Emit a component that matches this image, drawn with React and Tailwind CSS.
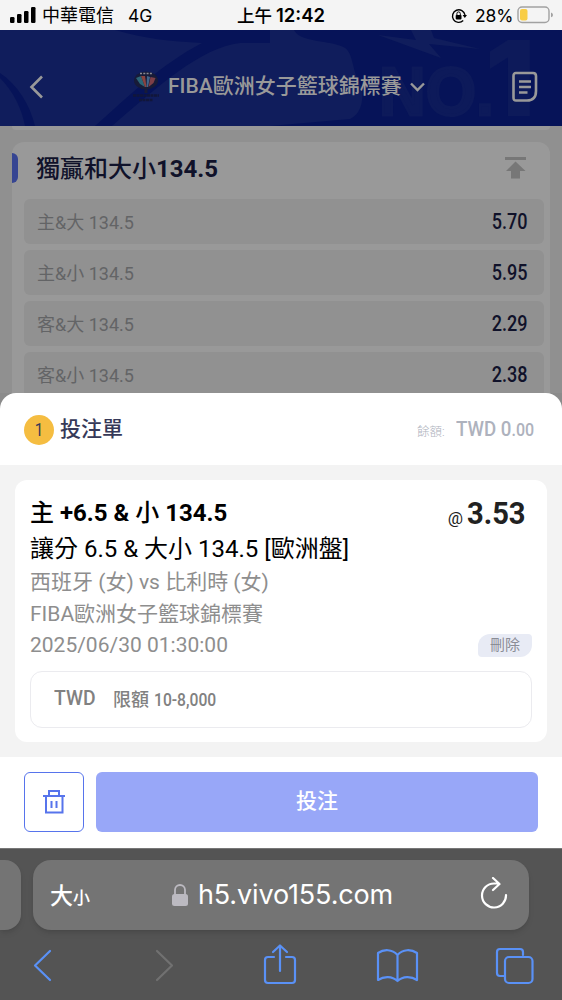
import clsx from "clsx";

const odds = [
  { label: "主&大 134.5", value: "5.70" },
  { label: "主&小 134.5", value: "5.95" },
  { label: "客&大 134.5", value: "2.29" },
  { label: "客&小 134.5", value: "2.38" },
];

const roboto = "font-[Roboto,'Noto_Sans_CJK_TC',sans-serif]";
const inter = "font-[Inter,'Noto_Sans_CJK_TC',sans-serif]";

function StatusBar() {
  return (
    <div className={clsx("flex h-[30px] shrink-0 items-center bg-[#f4f4f4] text-black", inter)}>
      <svg width="26" height="16" viewBox="0 0 26 16" className="ml-[10px] shrink-0">
        <rect x="0" y="10" width="4.5" height="6" rx="1.2" />
        <rect x="7" y="7" width="4.5" height="9" rx="1.2" />
        <rect x="14" y="4" width="4.5" height="12" rx="1.2" />
        <rect x="21" y="0" width="4.5" height="16" rx="1.2" />
      </svg>
      <span className="ml-[6px] w-[86px] pt-px text-[18px] whitespace-nowrap">中華電信</span>
      <span className="w-[109px] pt-[3px] text-[17.5px] whitespace-nowrap">4G</span>
      <span className="w-[214px] pt-[2px] text-[17.5px] whitespace-nowrap">
        <span className="font-medium">上午</span>
        <span className="ml-[4px] text-[18.5px] font-semibold">12:42</span>
      </span>
      <svg width="16" height="16" viewBox="0 0 16 16" className="mt-px shrink-0">
        <path d="M12.2 12.6A6.3 6.3 0 1 1 14 7" fill="none" stroke="#000" strokeWidth="1.4" />
        <path d="M11.6 7H16L13.8 10z" />
        <rect x="4.7" y="7" width="5.8" height="4.4" rx=".8" />
        <path d="M5.9 7V5.6a1.7 1.7 0 0 1 3.4 0V7" fill="none" stroke="#000" strokeWidth="1" />
      </svg>
      <span className="ml-2 w-[42px] pt-[3px] text-[17.5px] tracking-[-.1px] whitespace-nowrap">28%</span>
      <svg width="38" height="18" viewBox="0 0 38 18" className="shrink-0">
        <rect x="1" y="1" width="31" height="15.5" rx="4" fill="none" stroke="#a1a1a1" strokeWidth="1.4" />
        <rect x="3" y="3" width="7.5" height="11.5" rx="2" fill="#f8cd46" />
        <path d="M34 6.5q2 .7 2 2.4T34 11.3z" fill="#a1a1a1" />
      </svg>
    </div>
  );
}

function HeaderArt() {
  return (
    <svg viewBox="0 0 562 96" className="absolute inset-0 h-full w-full" fill="#101d5c">
      <path d="M0 0H115C145 9 170 11 202 13C160 35 130 65 95 96H35C30 75 18 55 0 43z" />
      <path d="M0 48C14 62 22 80 25 96H0z" />
      <path d="M270 13H240C200 18 160 55 112 96H270L350 89C363 83 363 67 362 57C350 40 355 20 341 16C325 10 300 12 294 0H270z" />
      <path d="M378 5L416 10L411 0H431L434 8L480 19L429 14L441 28z" />
      <g fill="#0d1a5a">
        <text x="379" y="85" fontSize="69" textLength="115" lengthAdjust="spacingAndGlyphs" fontWeight="700" stroke="#0d1a5a" strokeWidth="3" className="font-['Liberation_Sans',sans-serif]">
          NO.
        </text>
        <text x="485" y="86" fontSize="104" textLength="50" lengthAdjust="spacingAndGlyphs" fontWeight="900" className="font-[Inter,sans-serif]">
          1
        </text>
      </g>
    </svg>
  );
}

function Emblem() {
  return (
    <svg width="28" height="32" viewBox="0 0 28 32" className="shrink-0">
      <ellipse cx="14" cy="9.5" rx="12" ry="9" fill="#171b38" />
      <path d="M4 7l4 6 5 3-4-11z" fill="#2b6577" />
      <path d="M9 5l4 11h1.500L13 5z" fill="#8a4340" />
      <path d="M14.500 16l.5-11 3 1-2 10z" fill="#436489" />
      <path d="M16.500 16l2-10 5 1-2 5z" fill="#7d3f48" />
      <path d="M8 2.500h12" stroke="#8a8a94" strokeWidth="1.5" strokeDasharray="2 1.3" />
      <path d="M14 18v4" stroke="#171b38" strokeWidth="3" />
      <path d="M1 24.500h26M7 29h14" stroke="#11163a" strokeWidth="2.5" strokeDasharray="3 .5" />
    </svg>
  );
}

function Header() {
  return (
    <header className={clsx("relative h-24 shrink-0 bg-[#061358] text-[#999]", roboto)}>
      <HeaderArt />
      <div className="relative flex h-full items-center pt-[18px]">
        <svg width="15" height="24" viewBox="0 0 15 24" className="ml-[29px] shrink-0" fill="none" stroke="currentColor" strokeWidth="2.6">
          <path d="M13 1.5L2.5 12L13 22.5" />
        </svg>
        <div className="ml-[88px] flex w-[36px]">
          <Emblem />
        </div>
        <span className="w-[242px] text-[21px] font-medium whitespace-nowrap">FIBA歐洲女子籃球錦標賽</span>
        <svg width="15" height="10" viewBox="0 0 15 10" fill="none" stroke="currentColor" strokeWidth="2.4">
          <path d="M1 1.5L7.5 8L14 1.5" />
        </svg>
        <svg width="26" height="32" viewBox="0 0 26 32" className="ml-[87px] shrink-0" fill="none" stroke="currentColor" strokeWidth="2.6">
          <path d="M4 2H21Q24 2 24 5V20Q24 29.5 15 29.5H4Q1.5 29.5 1.5 27V5Q1.5 2 4 2z" />
          <path d="M7 10.5H19M7 16H19M7 21.5H15.5" />
        </svg>
      </div>
    </header>
  );
}

function Market() {
  return (
    <main className={clsx("h-[267px] shrink-0 overflow-hidden bg-[#909090] px-3", roboto)}>
      <div className="h-1 rounded-b-xl bg-[#999]" />
      <section className="mt-3 h-[260px] rounded-t-xl bg-[#999]">
        <div className="flex h-[57px] items-start">
          <div className="mt-[11px] h-[30px] w-[6px] rounded-r-md bg-[#364592]" />
          <h2 className="mt-[9px] ml-[18px] w-[463px] text-[24px] leading-9 font-medium text-[#10122a]">
            獨贏和大小<span className="font-bold">134.5</span>
          </h2>
          <svg width="22" height="22" viewBox="0 0 22 22" className="mt-[15px] ml-[6px]" fill="#777">
            <path d="M0 0H21V3H0zM10.500 4.500L20.500 14H15V21.500H6V14H1z" />
          </svg>
        </div>
        <div className="mr-[6px] ml-3 flex flex-col gap-[6px]">
          {odds.map((o) => (
            <div key={o.label} className="flex h-[45px] shrink-0 items-center justify-between rounded-md bg-[#919191] pt-px pr-[16px] pl-[13px]">
              <span className="text-[18px] text-[#636466]">{o.label}</span>
              <span className="origin-right scale-x-[.84] text-[21.5px] font-medium text-[#10122a]">{o.value}</span>
            </div>
          ))}
        </div>
      </section>
    </main>
  );
}

function BetSlip() {
  return (
    <div className="h-[455px] shrink-0 bg-[#8b8b8b]">
      <div className={clsx("flex h-full flex-col rounded-t-2xl bg-white", roboto)}>
        <div className="flex h-[72px] shrink-0 items-center pt-px">
          <span className="ml-6 flex h-[30px] w-[30px] items-center justify-center rounded-full bg-[#f5bd41] text-[18px] text-[#363958]">
            <span className="scale-x-[.85]">1</span>
          </span>
          <span className="ml-[6px] text-[21px] font-medium text-[#363958]">投注單</span>
          <div className="mr-[28px] ml-auto flex items-baseline text-[#aeb2bd]">
            <span className="w-[39px] text-[12.5px] font-light">餘額:</span>
            <span className="w-[78px] origin-left scale-x-[.89] text-[21px] font-medium whitespace-nowrap">
              TWD 0<span className="text-[18px]">.00</span>
            </span>
          </div>
        </div>
        <div className="h-[292px] shrink-0 bg-[#f3f3f3] p-[15px]">
          <div className="h-[262px] rounded-xl bg-white px-[15px] pt-[15px]">
            <div className="flex h-9 items-center justify-between">
              <span className="text-[24px] font-medium whitespace-nowrap text-black">
                主 <span className="font-bold">+6.5 &</span> 小 <span className="font-bold">134.5</span>
              </span>
              <span className="mt-1 mr-[7px] flex items-baseline text-[#212121]">
                <span className="text-[17px] leading-9">@</span>
                <span className="ml-[4px] w-[58px] origin-left scale-x-[.91] text-[32px] leading-9 font-bold">3.53</span>
              </span>
            </div>
            <div className="h-9 text-[24px] leading-9 text-black">讓分 6.5 & 大小 134.5 [歐洲盤]</div>
            <div className="flex items-end justify-between text-[21px] leading-[31.5px] text-[#8e8e8e]">
              <div>
                <p>西班牙 (女) vs 比利時 (女)</p>
                <p>FIBA歐洲女子籃球錦標賽</p>
                <p>2025/06/30 01:30:00</p>
              </div>
              <button className="mb-[4.5px] h-[23px] w-[54px] rounded-tl-xl rounded-tr-sm rounded-br-xl rounded-bl-sm bg-[#e8ebf5] text-[15px] leading-[23px] text-[#8b8d96]">
                刪除
              </button>
            </div>
            <div className="mt-[9px] flex h-[57px] items-center rounded-xl border-[1.5px] border-[#ebebef] pl-[23px] text-[#818181]">
              <span className="w-[59px] origin-left scale-x-[.92] text-[21px] font-medium">TWD</span>
              <span className="pt-px text-[18px] font-medium">限額</span>
              <span className="ml-[5px] origin-left scale-x-[.87] pt-px text-[18px] font-medium">10-8,000</span>
            </div>
          </div>
        </div>
        <div className="flex gap-3 pt-[15px] pl-6">
          <button className="flex h-[60px] w-[60px] items-center justify-center rounded-md border-[1.5px] border-[#5774ec]">
            <svg width="24" height="24" viewBox="0 0 24 24" className="mb-px" fill="none" stroke="#5774ec" strokeWidth="2">
              <path d="M1 6H23M7 6V1H17V6M4 6V22.5H20.5V6M9.5 11V18M14.5 11V18" />
            </svg>
          </button>
          <button className="h-[60px] w-[442px] rounded-md bg-[#98a7f8] text-[21px] font-medium text-white">投注</button>
        </div>
      </div>
    </div>
  );
}

function Browser() {
  return (
    <footer className={clsx("h-[152px] shrink-0 border-t border-[#777] bg-[#545454]", inter)}>
      <div className="flex gap-3 pt-[11px]">
        <div className="h-[70px] w-[21px] rounded-r-2xl bg-[#747474] shadow-md" />
        <div className="flex h-[70px] w-[496px] items-center rounded-[18px] bg-[#747474] text-white shadow-md">
          <span className="ml-[17px] flex w-[122px] items-baseline pt-[3px] text-[23px] font-medium">
            大<span className="text-[17px]">小</span>
          </span>
          <svg width="16" height="22" viewBox="0 0 16 22" className="shrink-0">
            <rect x="0" y="10" width="16" height="12" rx="2.5" fill="#bcbac1" />
            <path d="M3 11V6a5 5 0 0 1 10 0V11" fill="none" stroke="#bcbac1" strokeWidth="1.8" />
          </svg>
          <span className="ml-[10px] w-[282px] pt-px text-[27px] tracking-[-.15px]">h5.vivo155.com</span>
          <svg width="28" height="32" viewBox="0 0 28 32" className="mb-1" fill="none" stroke="#fff" strokeWidth="2.2" strokeLinecap="round" strokeLinejoin="round">
            <path d="M26 18A12 12 0 1 1 14 6.5H19M13 1L19.5 7L13 13" />
          </svg>
        </div>
      </div>
      <svg width="562" height="44" viewBox="0 0 562 44" className="mt-[13px]" fill="none" stroke="#5a91f6" strokeWidth="2.2" strokeLinecap="round" strokeLinejoin="round">
        <path d="M50 8L35 22.5L50 37" />
        <path d="M157 8L172 22.5L157 37" stroke="#717171" />
        <path d="M274 14H268Q265 14 265 17V37Q265 40 268 40H292Q295 40 295 37V17Q295 14 292 14H286M280 28V3M273 9L280 2.5L287 9" />
        <path d="M397.5 12C392 6 384 6 378 10V37C384 33 392 33 397.5 38C403 33 411 33 417 37V10C411 6 403 6 397.5 12V38" />
        <rect x="505" y="14" width="27.5" height="26" rx="4" />
        <path d="M504 33H500Q497 33 497 30V9Q497 6 500 6H520Q523 6 523 9V12" />
      </svg>
    </footer>
  );
}

export default function App() {
  return (
    <div className="flex h-[1000px] w-[562px] flex-col overflow-hidden">
      <StatusBar />
      <Header />
      <Market />
      <BetSlip />
      <Browser />
    </div>
  );
}
